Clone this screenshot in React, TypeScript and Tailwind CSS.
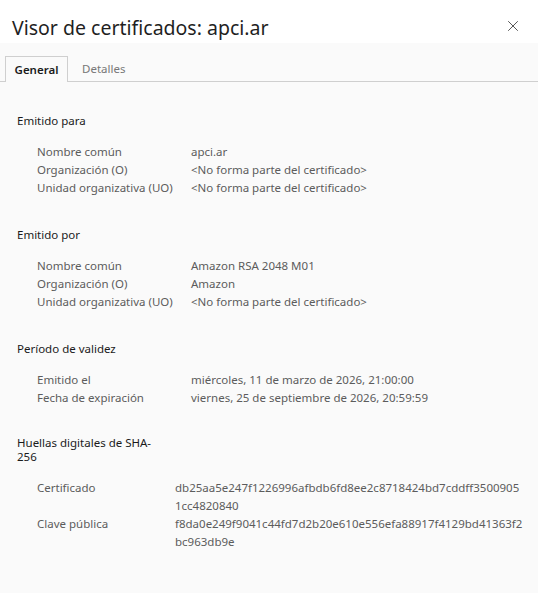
import { X } from "lucide-react";

type Row = { label: string; value: string[] };

const sections: { title: string[]; rows: Row[]; labelW: string; gap: string }[] = [
	{
		title: ["Emitido para"],
		labelW: "w-[154px]",
		gap: "mt-0",
		rows: [
			{ label: "Nombre común", value: ["apci.ar"] },
			{ label: "Organización (O)", value: ["<No forma parte del certificado>"] },
			{ label: "Unidad organizativa (UO)", value: ["<No forma parte del certificado>"] }
		]
	},
	{
		title: ["Emitido por"],
		labelW: "w-[154px]",
		gap: "mt-[31px]",
		rows: [
			{ label: "Nombre común", value: ["Amazon RSA 2048 M01"] },
			{ label: "Organización (O)", value: ["Amazon"] },
			{ label: "Unidad organizativa (UO)", value: ["<No forma parte del certificado>"] }
		]
	},
	{
		title: ["Período de validez"],
		labelW: "w-[154px]",
		gap: "mt-[31px]",
		rows: [
			{ label: "Emitido el", value: ["miércoles, 11 de marzo de 2026, 21:00:00"] },
			{ label: "Fecha de expiración", value: ["viernes, 25 de septiembre de 2026, 20:59:59"] }
		]
	},
	{
		title: ["Huellas digitales de SHA-", "256"],
		labelW: "w-[138px]",
		gap: "mt-[29px]",
		rows: [
			{
				label: "Certificado",
				value: ["db25aa5e247f1226996afbdb6fd8ee2c8718424bd7cddff3500905", "1cc4820840"]
			},
			{
				label: "Clave pública",
				value: ["f8da0e249f9041c44fd7d2b20e610e556efa88917f4129bd41363f2", "bc963db9e"]
			}
		]
	}
];

export default function App() {
	return (
		<div
			className="w-[538px] h-[593px] bg-[#fafafa] overflow-hidden"
			style={{ fontFamily: '"Noto Sans", "Open Sans", sans-serif' }}
		>
			<div className="bg-white h-[43px] flex items-center justify-between pl-3 pr-[16px]">
				<h1 className="text-[19.5px] leading-none text-[#1f1f1f] pt-[13px]">
					Visor de certificados: apci.ar
				</h1>
				<X size={18} strokeWidth={1.1} className="text-[#333] mt-[8px]" />
			</div>
			<div className="mt-[13px] flex items-end border-b border-[#cfcfcf] h-[26px]">
				<div className="ml-[5px] w-[63px] h-[26px] border border-b-0 border-[#cfcfcf] bg-[#fafafa] -mb-px flex items-center justify-center text-[11.5px] font-semibold text-[#1a1a1a]">
					General
				</div>
				<div className="ml-[14px] h-[25px] flex items-center text-[11.5px] text-[#777]">
					Detalles
				</div>
			</div>
			<div className="pt-[32px] pl-[17px] flex flex-col">
				{sections.map(s => (
					<div key={s.title[0]} className={s.gap}>
						<h3 className="text-[11.5px] leading-[14px] text-[#1a1a1a]">
							{s.title.map(t => (
								<div key={t}>{t}</div>
							))}
						</h3>
						<div className="mt-[15px] pl-[20px] flex flex-col">
							{s.rows.map(r => (
								<div key={r.label} className="flex text-[11.5px] leading-[18px] text-[#5c5c5c]">
									<div className={`${s.labelW} shrink-0`}>{r.label}</div>
									<div>
										{r.value.map(v => (
											<div key={v}>{v}</div>
										))}
									</div>
								</div>
							))}
						</div>
					</div>
				))}
			</div>
		</div>
	);
}
